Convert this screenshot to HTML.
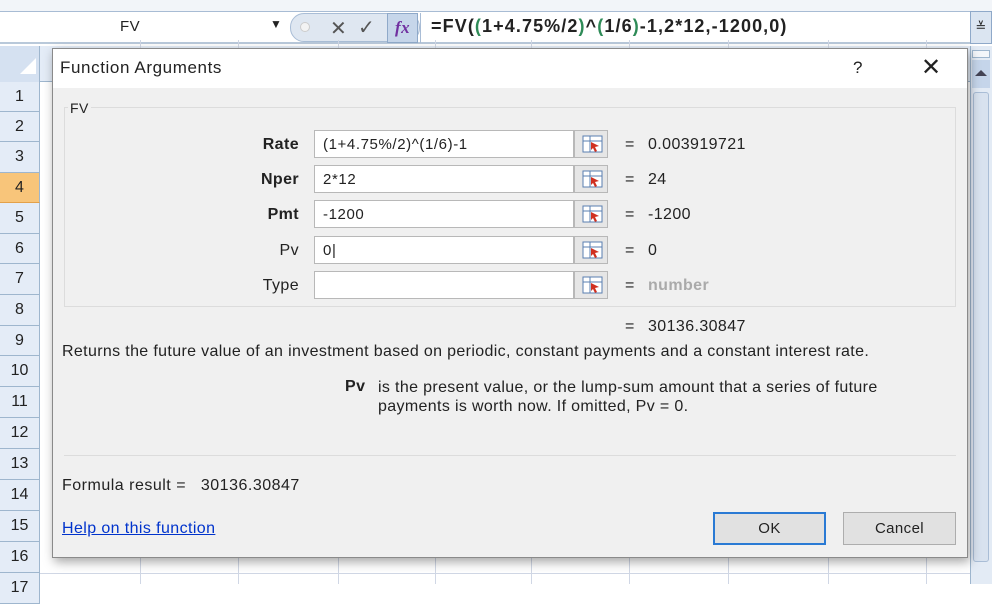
<!DOCTYPE html>
<html><head><style>
*{margin:0;padding:0;box-sizing:border-box}
body{width:992px;height:584px;overflow:hidden;background:#fff;font-family:"Liberation Sans",sans-serif;position:relative;font-size:14px;color:#222;letter-spacing:0.4px}
.abs{position:absolute}
.rh{position:absolute;left:0;width:40px;background:#e4ecf7;border-bottom:1px solid #9eb6ce;border-right:1px solid #9eb6ce;color:#222;font-size:16px;text-align:center;letter-spacing:0}
.vl{position:absolute;top:40px;width:1px;height:544px;background:#d0d7e5}
.hl{position:absolute;left:40px;width:930px;height:1px;background:#d0d7e5}
.lbl{position:absolute;right:693px;font-size:16px;text-align:right}
.inp{position:absolute;left:314px;width:260px;height:28px;background:#fff;border:1px solid #b8b8b8;font-size:15px;padding:5px 8px;letter-spacing:0.6px}
.ib{position:absolute;left:574px;width:34px;height:28px;background:#e6e6e6;border:1px solid #b8b8b8}
.eq{position:absolute;left:625px;font-size:16px}
.val{position:absolute;left:648px;font-size:16px}
</style></head><body>
<div class="abs" style="left:0;top:0;width:992px;height:12px;background:#f2f5f9"></div>
<div class="abs" style="left:0;top:11px;width:992px;height:33px;background:#fff;border-top:1px solid #a8bcd4;border-bottom:2px solid #b9c9da"></div>
<div class="abs" style="left:120px;top:18px;font-size:15px">FV</div>
<div class="abs" style="left:270px;top:17px;font-size:12px">▼</div>
<div class="abs" style="left:290px;top:13px;width:130px;height:29px;border-radius:14px;background:#dfe7f1;border:1px solid #a9bdd6"></div>
<div class="abs" style="left:300px;top:22px;width:10px;height:10px;border-radius:5px;background:#f3f3f3;border:1px solid #ccc"></div>
<div class="abs" style="left:330px;top:16px;font-size:20px;color:#555">✕</div>
<div class="abs" style="left:358px;top:15px;font-size:20px;color:#555">✓</div>
<div class="abs" style="left:387px;top:13px;width:31px;height:30px;background:#c6d6ea;border:1px solid #8fa9c9;color:#7030a0;font-style:italic;font-weight:bold;font-family:'Liberation Serif',serif;font-size:17px;text-align:center;line-height:28px">fx</div>
<div class="abs" style="left:420px;top:13px;width:1px;height:30px;background:#a9bdd6"></div>
<div class="abs" style="left:431px;top:16px;font-size:18px;font-weight:bold;letter-spacing:1.1px">=FV(<span style="color:#2e8b57">(</span>1+4.75%/2<span style="color:#2e8b57">)</span>^<span style="color:#2e8b57">(</span>1/6<span style="color:#2e8b57">)</span>-1,2*12,-1200,0)</div>
<div class="abs" style="left:970px;top:11px;width:22px;height:33px;background:#dbe5f1;border:1px solid #8fa9c9;text-align:center;line-height:30px;font-size:13px">≚</div>
<!-- grid -->
<div class="abs" style="left:0;top:46px;width:970px;height:36px;background:#e4ecf7;border-bottom:1px solid #9eb6ce"></div>
<div class="abs" style="left:0;top:46px;width:40px;height:36px;background:#d5e1f1;border-right:1px solid #9eb6ce"></div>
<div class="abs" style="left:20px;top:58px;width:0;height:0;border-left:16px solid transparent;border-bottom:16px solid #fff"></div>
<div class="vl" style="left:140px"></div><div class="vl" style="left:238px"></div><div class="vl" style="left:338px"></div><div class="vl" style="left:435px"></div><div class="vl" style="left:531px"></div><div class="vl" style="left:629px"></div><div class="vl" style="left:728px"></div><div class="vl" style="left:828px"></div><div class="vl" style="left:926px"></div>
<div class="hl" style="top:573px"></div>
<div class="rh" style="top:82px;height:30px;line-height:29px">1</div>
<div class="rh" style="top:112px;height:30px;line-height:29px">2</div>
<div class="rh" style="top:142px;height:31px;line-height:30px">3</div>
<div class="rh" style="top:173px;height:30px;line-height:29px;background:#f8c57a;border-bottom-color:#e3a14a">4</div>
<div class="rh" style="top:203px;height:31px;line-height:30px">5</div>
<div class="rh" style="top:234px;height:30px;line-height:29px">6</div>
<div class="rh" style="top:264px;height:31px;line-height:30px">7</div>
<div class="rh" style="top:295px;height:31px;line-height:30px">8</div>
<div class="rh" style="top:326px;height:30px;line-height:29px">9</div>
<div class="rh" style="top:356px;height:31px;line-height:30px">10</div>
<div class="rh" style="top:387px;height:31px;line-height:30px">11</div>
<div class="rh" style="top:418px;height:31px;line-height:30px">12</div>
<div class="rh" style="top:449px;height:31px;line-height:30px">13</div>
<div class="rh" style="top:480px;height:31px;line-height:30px">14</div>
<div class="rh" style="top:511px;height:31px;line-height:30px">15</div>
<div class="rh" style="top:542px;height:31px;line-height:30px">16</div>
<div class="rh" style="top:573px;height:31px;line-height:30px">17</div>
<div class="abs" style="left:970px;top:46px;width:22px;height:538px;background:#e3ebf5;border-left:1px solid #9eb6ce"></div>
<div class="abs" style="left:972px;top:50px;width:18px;height:8px;background:#f3f6fa;border:1px solid #9eb6ce"></div>
<div class="abs" style="left:972px;top:60px;width:18px;height:28px;background:#c5d5ea"></div>
<div class="abs" style="left:975px;top:70px;width:0;height:0;border-left:6px solid transparent;border-right:6px solid transparent;border-bottom:6px solid #445"></div>
<div class="abs" style="left:973px;top:92px;width:16px;height:470px;background:#d8e2ef;border:1px solid #a9bdd6;border-radius:3px"></div>
<!-- dialog -->
<div class="abs" style="left:52px;top:48px;width:916px;height:510px;background:#f0f0f0;border:1px solid #8a8a8a;box-shadow:2px 4px 10px rgba(0,0,0,.35)"></div>
<div class="abs" style="left:53px;top:49px;width:914px;height:39px;background:#fff"></div>
<div class="abs" style="left:60px;top:58px;font-size:17px;letter-spacing:0.6px">Function Arguments</div>
<div class="abs" style="left:853px;top:58px;font-size:17px">?</div>
<div class="abs" style="left:921px;top:53px;font-size:24px;font-weight:300">✕</div>
<div class="abs" style="left:64px;top:107px;width:892px;height:200px;border:1px solid #dcdcdc"></div>
<div class="abs" style="left:68px;top:100px;font-size:14px;background:#f0f0f0;padding:0 2px">FV</div>
<div class="lbl" style="top:136px;font-weight:bold">Rate</div>
<div class="lbl" style="top:171px;font-weight:bold">Nper</div>
<div class="lbl" style="top:206px;font-weight:bold">Pmt</div>
<div class="lbl" style="top:242px">Pv</div>
<div class="lbl" style="top:277px">Type</div>
<div class="inp" style="top:130px">(1+4.75%/2)^(1/6)-1</div><div class="ib" style="top:130px"></div>
<div class="inp" style="top:165px">2*12</div><div class="ib" style="top:165px"></div>
<div class="inp" style="top:200px">-1200</div><div class="ib" style="top:200px"></div>
<div class="inp" style="top:236px">0|</div><div class="ib" style="top:236px"></div>
<div class="inp" style="top:271px"></div><div class="ib" style="top:271px"></div>
<div class="eq" style="top:136px">=</div><div class="val" style="top:136px">0.003919721</div>
<div class="eq" style="top:171px">=</div><div class="val" style="top:171px">24</div>
<div class="eq" style="top:206px">=</div><div class="val" style="top:206px">-1200</div>
<div class="eq" style="top:242px">=</div><div class="val" style="top:242px">0</div>
<div class="eq" style="top:277px">=</div><div class="val" style="top:277px;color:#aaa;font-weight:bold">number</div>
<div class="eq" style="top:318px">=</div><div class="val" style="top:318px">30136.30847</div>
<div class="abs" style="left:62px;top:343px;font-size:16px;letter-spacing:0.35px">Returns the future value of an investment based on periodic, constant payments and a constant interest rate.</div>
<div class="abs" style="left:345px;top:378px;font-size:16px;font-weight:bold">Pv</div>
<div class="abs" style="left:378px;top:378px;font-size:16px;line-height:19px;letter-spacing:0.35px">is the present value, or the lump-sum amount that a series of future<br>payments is worth now. If omitted, Pv = 0.</div>
<div class="abs" style="left:64px;top:455px;width:892px;height:1px;background:#dcdcdc"></div>
<div class="abs" style="left:62px;top:477px;font-size:16px;letter-spacing:0.5px">Formula result =&nbsp;&nbsp; 30136.30847</div>
<div class="abs" style="left:62px;top:520px;font-size:16px;color:#0033cc;text-decoration:underline">Help on this function</div>
<div class="abs" style="left:713px;top:512px;width:113px;height:33px;background:#e1e1e1;border:2px solid #2a7ad4;text-align:center;line-height:29px;font-size:15px">OK</div>
<div class="abs" style="left:843px;top:512px;width:113px;height:33px;background:#e1e1e1;border:1px solid #adadad;text-align:center;line-height:31px;font-size:15px">Cancel</div>
<svg class="abs" style="left:0;top:0" width="992" height="584">
<g id="ic">
<rect x="583" y="136" width="19" height="16" fill="#fff" stroke="#5a7fb0"/><line x1="583" y1="141" x2="602" y2="141" stroke="#5a7fb0"/><line x1="590" y1="136" x2="590" y2="152" stroke="#5a7fb0"/><path d="M591 142l8 4-4 1 2 4-2 1-2-4-2 2z" fill="#d03020"/>
</g>
<use href="#ic" y="35"/><use href="#ic" y="70"/><use href="#ic" y="106"/><use href="#ic" y="141"/>
</svg>
</body></html>
